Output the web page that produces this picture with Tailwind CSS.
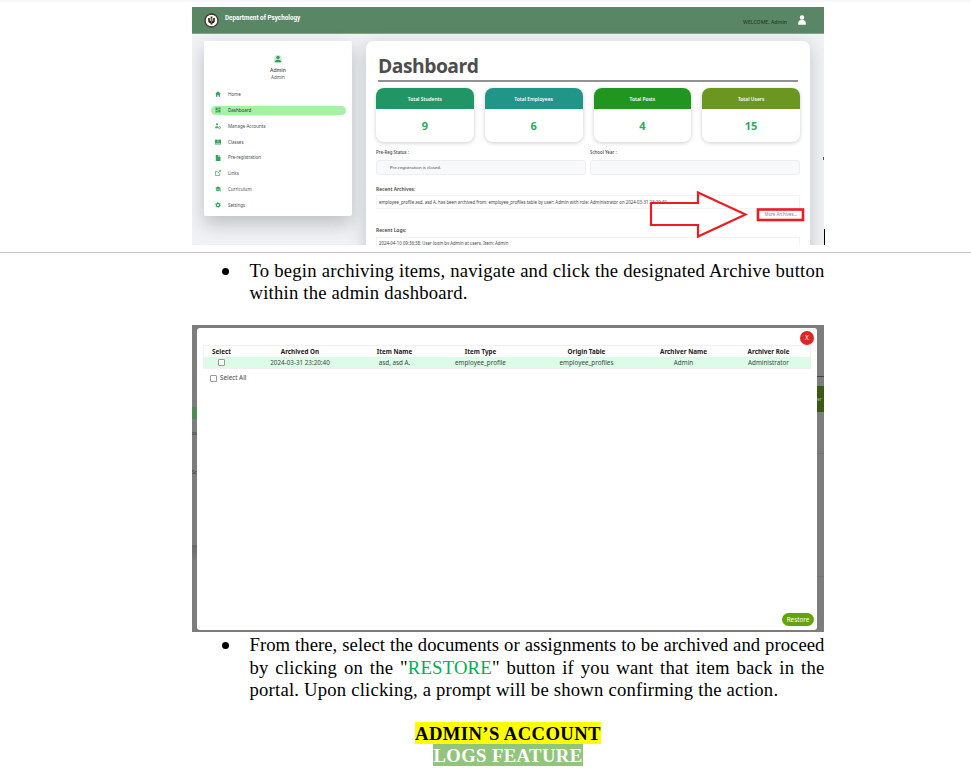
<!DOCTYPE html>
<html lang="en">
<head>
<meta charset="utf-8">
<title>Admin manual</title>
<script src="https://cdn.jsdelivr.net/npm/@tailwindcss/browser@4"></script>
</head>
<body class="bg-white w-[971px] h-[774px] overflow-hidden text-black font-['Liberation_Serif',serif]">

<!-- First page -->
<section class="h-[253px] border-b border-[#c4c4c4] bg-linear-to-b from-[#f5f5f5] from-0% to-white to-[3px] pt-[7px] pl-[192px] flex items-start">
  <div class="w-[632px] h-[238px] overflow-hidden bg-[#f0f2f4] font-['Noto_Sans',sans-serif] relative">
    <header class="h-[27px] bg-[#598766] border-b border-[#86a68f] flex items-center pl-[12px] pr-[18px]">
      <svg class="size-[15px] shrink-0" viewBox="0 0 15 15">
        <circle cx="7.5" cy="7.5" r="6.5" fill="#e8e4dc" stroke="#3a3230" stroke-width="1.3"/>
        <circle cx="7.5" cy="7.5" r="6.6" fill="none" stroke="#b03a3a" stroke-width="1" stroke-dasharray="1.500 5.400"/>
        <circle cx="7.5" cy="7.5" r="5.400" fill="#fff"/>
        <path d="M7.500 3.500v8M5 5v2.500q0 2 2.500 2t2.500-2V5" fill="none" stroke="#2b2622" stroke-width="1.700"/>
        <path d="M7.500 5v4.500" stroke="#d9a53a" stroke-width=".6"/>
      </svg>
      <span class="ml-[6px] -mt-[4px] text-[6.300px] leading-[8px] font-bold text-white whitespace-nowrap font-[Roboto,sans-serif]">Department of Psychology</span>
      <span class="ml-auto mt-[3px] text-[5.150px] leading-[8px] text-[#26382d] font-medium whitespace-nowrap">WELCOME, Admin</span>
      <svg class="ml-[11px] w-[8px] h-[10px]" viewBox="0 0 8 10"><circle cx="4" cy="2.500" r="2.200" fill="#fff"/><path d="M.2 9.700V8Q.4 5.500 2.500 5h3q2.200.5 2.300 3v1.700z" fill="#fff"/></svg>
    </header>
    <div class="flex items-start pl-[12px] pt-[7px] gap-[14px]">
      <aside class="w-[148px] h-[175px] shrink-0 bg-white rounded-[2px] shadow-[0_8px_18px_rgba(60,70,80,0.28)] flex flex-col">
        <div class="flex flex-col items-center pt-[14px] h-[45.600px]">
          <svg class="size-[8px]" viewBox="0 0 8 8"><rect x=".3" y=".2" width="7.400" height="7.600" rx="2" fill="#cfe8d8"/><circle cx="4" cy="2.400" r="1.700" fill="#2f9e57"/><path d="M.6 7.300Q.8 4.800 4 4.800t3.400 2.500z" fill="#2f9e57"/></svg>
          <b class="text-[5px] leading-[7px] mt-[4px] text-[#555] font-semibold">Admin</b>
          <span class="text-[4.500px] leading-[7px] text-[#555]">Admin</span>
        </div>
        <nav class="flex flex-col px-[7px] text-[4.500px] text-[#4a4f55]">
          <a class="h-[15.800px] flex items-center gap-[7px] pl-[4px]"><svg class="size-[6px]" viewBox="0 0 12 12"><path d="M6 .5L.3 5.700H2V11.500H4.800V8H7.200v3.500H10V5.700h1.700z" fill="#38a35c"/></svg>Home</a>
          <a class="h-[15.800px] flex items-center"><span class="h-[9px] w-[135px] rounded-full bg-[#a8f0a8] flex items-center gap-[7px] pl-[4px] text-[#263a2a] shrink-0"><svg class="size-[6px]" viewBox="0 0 12 12"><path d="M1 1h4.500v5.500H1zM6.500 1H11v3H6.500zM1 7.500h4.500V11H1zM6.500 5H11v6H6.500z" fill="#38a35c"/></svg>Dashboard</span></a>
          <a class="h-[15.800px] flex items-center gap-[7px] pl-[4px]"><svg class="size-[6px]" viewBox="0 0 12 12"><circle cx="4" cy="2.600" r="2.200" fill="#38a35c"/><path d="M0 10.500Q0 6.300 4 6.300q1.500 0 2 .5L5.600 9v1.500z" fill="#38a35c"/><circle cx="9" cy="9" r="2" fill="none" stroke="#38a35c" stroke-width="1.500"/></svg>Manage Accounts</a>
          <a class="h-[15.800px] flex items-center gap-[7px] pl-[4px]"><svg class="size-[6px]" viewBox="0 0 12 12"><path d="M0 1.500Q3 .3 5.600 1.500V9.500Q3 8.500 0 9.500zM6.400 1.500Q9 .3 12 1.500V9.500Q9 8.500 6.400 9.500zM0 10.300h12v1.400H0z" fill="#38a35c"/></svg>Classes</a>
          <a class="h-[15.800px] flex items-center gap-[7px] pl-[4px]"><svg class="size-[6px]" viewBox="0 0 12 12"><path d="M1.500 0H7v4h4v8H1.500zM8 0l3 3H8z" fill="#38a35c"/></svg>Pre-registration</a>
          <a class="h-[15.800px] flex items-center gap-[7px] pl-[4px]"><svg class="size-[6px]" viewBox="0 0 12 12"><path d="M6 2.500H1v8.500h8.500V6.500M5.500 6.500L11 1M7.500.8H11.200V4.500" fill="none" stroke="#38a35c" stroke-width="1.300"/></svg>Links</a>
          <a class="h-[15.800px] flex items-center gap-[7px] pl-[4px]"><svg class="size-[6px]" viewBox="0 0 12 12"><path d="M6 1L0 4l6 3 6-3zM2 6v3q4 3 8 0V6L6 8zM11 5h1v6h-1z" fill="#38a35c"/></svg>Curriculum</a>
          <a class="h-[15.800px] flex items-center gap-[7px] pl-[4px]"><svg class="size-[6px]" viewBox="0 0 12 12"><circle cx="6" cy="6" r="3.200" fill="none" stroke="#38a35c" stroke-width="2.400"/><circle cx="6" cy="6" r="5" fill="none" stroke="#38a35c" stroke-width="1.500" stroke-dasharray="2.600 2.636"/></svg>Settings</a>
        </nav>
      </aside>

      <main class="w-[444px] h-[240px] shrink-0 bg-white rounded-[7px] shadow-[0_5px_18px_rgba(60,70,80,0.25)] px-[10px] flex flex-col">
        <h1 class="mt-[11px] mx-[2px] h-[30px] w-[420px] border-b-2 border-[#929292] text-[19.300px] leading-[27px] font-bold text-[#4d4d4d] font-['Open_Sans',sans-serif]"><span class="tracking-[-0.500px]">Dashboard</span></h1>
        <div class="mt-[6px] grid grid-cols-4 gap-[11px] text-center">
          <div class="h-[54px] rounded-[8px] overflow-clip bg-white shadow-[0_1px_4px_rgba(0,0,0,0.2)]"><div class="h-[21px] bg-[#209666] text-white text-[4.900px] leading-[22px] font-semibold">Total Students</div><div class="text-[11px] leading-[34px] text-[#2fa95b] font-bold font-['Open_Sans',sans-serif]">9</div></div>
          <div class="h-[54px] rounded-[8px] overflow-clip bg-white shadow-[0_1px_4px_rgba(0,0,0,0.2)]"><div class="h-[21px] bg-[#209688] text-white text-[4.900px] leading-[22px] font-semibold">Total Employees</div><div class="text-[11px] leading-[34px] text-[#2fa95b] font-bold font-['Open_Sans',sans-serif]">6</div></div>
          <div class="h-[54px] rounded-[8px] overflow-clip bg-white shadow-[0_1px_4px_rgba(0,0,0,0.2)]"><div class="h-[21px] bg-[#209620] text-white text-[4.900px] leading-[22px] font-semibold">Total Posts</div><div class="text-[11px] leading-[34px] text-[#2fa95b] font-bold font-['Open_Sans',sans-serif]">4</div></div>
          <div class="h-[54px] rounded-[8px] overflow-clip bg-white shadow-[0_1px_4px_rgba(0,0,0,0.2)]"><div class="h-[21px] bg-[#6b9620] text-white text-[4.900px] leading-[22px] font-semibold">Total Users</div><div class="text-[11px] leading-[34px] text-[#2fa95b] font-bold font-['Open_Sans',sans-serif]">15</div></div>
        </div>
        <div class="mt-[6px] grid grid-cols-2 gap-[4px] text-[4.300px] text-[#444]">
          <div><div class="h-[12px] leading-[8px] text-[4.400px] font-medium">Pre-Reg Status :</div><div class="h-[15px] border border-[#eceef0] rounded-[3px] bg-[#f8f9fb] pl-[13px] leading-[13px]">Pre-registration is closed.</div></div>
          <div><div class="h-[12px] leading-[8px] text-[4.400px] font-medium">School Year :</div><div class="h-[15px] border border-[#eceef0] rounded-[3px] bg-[#f8f9fb]"></div></div>
        </div>
        <h2 class="mt-[10px] h-[10px] leading-[8px] text-[4.900px] font-semibold text-[#444]">Recent Archives:</h2>
        <div class="h-[14px] border border-[#f3f3f3] pl-[2px] text-[4.350px] leading-[12px] text-[#444] whitespace-nowrap">employee_profile asd, asd A. has been archived from: employee_profiles table by user: Admin with role: Administrator on 2024-03-31 23:20:40</div>
        <div class="h-[17px] text-right text-[4.350px] leading-[10px] pr-[3px] text-[#888]">More Archives...</div>
        <h2 class="h-[11px] leading-[9px] text-[4.900px] font-semibold text-[#444]">Recent Logs:</h2>
        <div class="h-[14px] border border-[#f3f3f3] pl-[2px] text-[4.350px] leading-[11px] text-[#444] whitespace-nowrap">2024-04-10 09:36:38: User login by Admin at users. Item: Admin</div>
      </main>
    </div>
    <!-- Callout arrow and frame -->
    <svg class="absolute left-[456px] top-[180px] w-[160px] h-[56px]" viewBox="0 0 160 56" fill="none" stroke="#ed1c24" stroke-width="2.200"><path d="M3 16H50V5.500L97.500 27.500L50 49.500V38H3z"/><rect x="110" y="22.500" width="45" height="10.500" stroke-width="2.600"/></svg>
    <i class="absolute right-0 top-[150px] w-px h-[3px] bg-[#555]"></i>
  </div>
  <div class="w-px h-[16px] mt-[222px] bg-black"></div>
</section>

<!-- Second page -->
<section class="pl-[192px] w-[825px] text-[18.670px]">
  <div class="flex pt-[7px] leading-[22px] tracking-[0.210px]">
    <span class="w-[57.500px] pl-[30px] shrink-0 flex"><i class="mt-[8px] size-[7px] rounded-full bg-black"></i></span>
    <div class="w-[575px] whitespace-nowrap">
      <p class="[text-align-last:justify]">To begin archiving items, navigate and click the designated Archive button</p>
      <p>within the admin dashboard.</p>
    </div>
  </div>

  <div class="mt-[21px] w-[632px] h-[307px] bg-[#7d7d7d] flex pt-[3px] font-['Noto_Sans',sans-serif]">
    <div class="w-[5px] shrink-0 pt-[79px]">
      <div class="h-[12px] bg-[#4f8a58]"></div>
      <div class="mt-[12px] h-[4px] text-[4.500px] leading-[4px] text-[#333]">ou</div>
      <div class="mt-[35px] h-[4px] text-[4.500px] leading-[4px] text-[#333]">Sc</div>
      <div class="mt-[71px] h-[83px] bg-linear-to-b from-[#686868] to-[#7d7d7d] to-[16px]"></div>
    </div>
    <div class="w-[620px] h-[302px] shrink-0 bg-white rounded-[3px] flex flex-col pl-[6px] pr-[3px] pt-[3px] pb-[4px] text-[6.300px] text-[#444]">
      <div class="self-end size-[14px] -mt-[0.500px] mb-[0.500px] rounded-full bg-[#dc2626] text-white text-center leading-[14px] text-[6.500px]">X</div>
      <div class="w-[608px] border border-[#f0f0f0] text-center">
        <div class="h-[11px] leading-[11px] grid grid-cols-[35px_122px_67px_105px_107px_87px_83px] font-bold text-[#222]"><span>Select</span><span>Archived On</span><span>Item Name</span><span>Item Type</span><span>Origin Table</span><span>Archiver Name</span><span>Archiver Role</span></div>
        <div class="h-[11px] leading-[11px] grid grid-cols-[35px_122px_67px_105px_107px_87px_83px] bg-[#dcfce7]"><span class="flex items-center justify-center"><i class="size-[7px] border border-[#999] rounded-[1px] bg-white"></i></span><span>2024-03-31 23:20:40</span><span>asd, asd A.</span><span>employee_profile</span><span>employee_profiles</span><span>Admin</span><span>Administrator</span></div>
      </div>
      <div class="mt-[3px] pl-[7px] flex items-center gap-[3px] h-[12px]"><i class="size-[7px] border border-[#999] rounded-[1px] bg-white"></i>Select All</div>
      <div class="mt-auto self-end w-[32px] h-[13px] rounded-full bg-[#65a30d] text-white text-center leading-[13px]">Restore</div>
    </div>
    <div class="w-[7px] shrink-0 pt-[48px] overflow-hidden">
      <div class="h-px bg-[#444]"></div>
      <div class="mt-[9px] h-[26px] bg-[#3c5813] text-[5px] leading-[27px] text-[#aaa]">er</div>
      <div class="mt-[41px] h-[124px] border-y border-[#747474]"></div>
    </div>
  </div>

  <div class="flex pt-[2px] leading-[22.500px] tracking-[0.210px]">
    <span class="w-[57.500px] pl-[30px] shrink-0 flex"><i class="mt-[8px] size-[7px] rounded-full bg-black"></i></span>
    <div class="w-[575px] whitespace-nowrap">
      <p class="[text-align-last:justify] tracking-[0.050px]">From there, select the documents or assignments to be archived and proceed</p>
      <p class="[text-align-last:justify] h-[22px] leading-[22px]">by clicking on the "<span class="text-[#00b050]">RESTORE</span>" button if you want that item back in the</p>
      <p>portal. Upon clicking, a prompt will be shown confirming the action.</p>
    </div>
  </div>
  <div class="mt-[21px] w-[632px] flex flex-col items-center font-bold leading-[22px] whitespace-nowrap tracking-[0.400px]">
    <h2 class="bg-[#ffff00] h-[22px] leading-[24px]">ADMIN’S ACCOUNT</h2>
    <h2 class="bg-[#93c47d] h-[22px] leading-[24px] text-white">LOGS FEATURE</h2>
  </div>
</section>
</body>
</html>
